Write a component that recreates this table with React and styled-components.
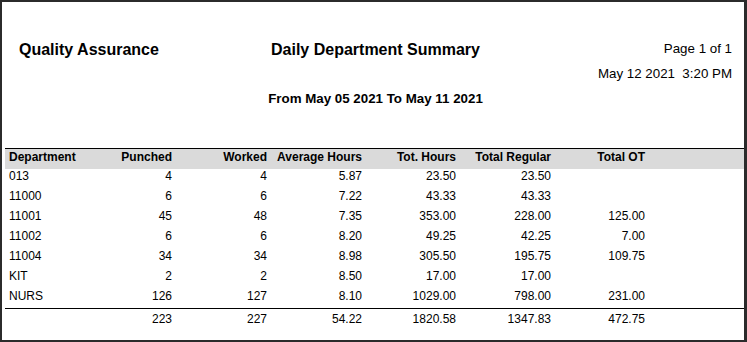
import React from "react";
import styled, { createGlobalStyle } from "styled-components";

const rows = [
  { dept: "013", punched: "4", worked: "4", avg: "5.87", tot: "23.50", reg: "23.50", ot: "" },
  { dept: "11000", punched: "6", worked: "6", avg: "7.22", tot: "43.33", reg: "43.33", ot: "" },
  { dept: "11001", punched: "45", worked: "48", avg: "7.35", tot: "353.00", reg: "228.00", ot: "125.00" },
  { dept: "11002", punched: "6", worked: "6", avg: "8.20", tot: "49.25", reg: "42.25", ot: "7.00" },
  { dept: "11004", punched: "34", worked: "34", avg: "8.98", tot: "305.50", reg: "195.75", ot: "109.75" },
  { dept: "KIT", punched: "2", worked: "2", avg: "8.50", tot: "17.00", reg: "17.00", ot: "" },
  { dept: "NURS", punched: "126", worked: "127", avg: "8.10", tot: "1029.00", reg: "798.00", ot: "231.00" },
];

const totals = { dept: "", punched: "223", worked: "227", avg: "54.22", tot: "1820.58", reg: "1347.83", ot: "472.75" };

const columns = [
  { key: "dept", label: "Department", align: "left" },
  { key: "punched", label: "Punched" },
  { key: "worked", label: "Worked" },
  { key: "avg", label: "Average Hours" },
  { key: "tot", label: "Tot. Hours" },
  { key: "reg", label: "Total Regular" },
  { key: "ot", label: "Total OT" },
];

export default function App() {
  return (
    <>
      <GlobalStyle />
      <Frame>
        <TitleRow>
          <Title>Quality Assurance</Title>
          <Title>Daily Department Summary</Title>
          <Meta>
            <MetaLine>Page 1 of 1</MetaLine>
            <MetaLine $gap>May 12 2021  3:20 PM</MetaLine>
          </Meta>
        </TitleRow>
        <Range>From May 05 2021 To May 11 2021</Range>
        <Table>
          <HeadRow>
            {columns.map((c) => (
              <Cell key={c.key} $align={c.align}>
                {c.label}
              </Cell>
            ))}
          </HeadRow>
          {rows.map((r) => (
            <DataRow key={r.dept}>
              {columns.map((c) => (
                <Cell key={c.key} $align={c.align}>
                  {r[c.key]}
                </Cell>
              ))}
            </DataRow>
          ))}
          <TotalRow>
            {columns.map((c) => (
              <Cell key={c.key} $align={c.align}>
                {totals[c.key]}
              </Cell>
            ))}
          </TotalRow>
        </Table>
      </Frame>
    </>
  );
}

const GlobalStyle = createGlobalStyle`
  html, body {
    margin: 0;
    padding: 0;
    background: #2b2b2b;
  }
  body {
    font-family: "Liberation Sans", Arial, sans-serif;
    color: #000;
  }
`;

const Frame = styled.div`
  box-sizing: border-box;
  width: 747px;
  height: 342px;
  background: #fff;
  border: 2px solid #2b2b2b;
  border-right-width: 3px;
  padding-top: 39px;
  overflow: hidden;
`;

const TitleRow = styled.div`
  display: grid;
  grid-template-columns: 1fr auto 1fr;
  align-items: start;
  padding: 0 12px 0 17px;
`;

const Title = styled.div`
  font-size: 16px;
  font-weight: bold;
  line-height: 18px;
  white-space: nowrap;
`;

const Meta = styled.div`
  display: flex;
  flex-direction: column;
  align-items: flex-end;
`;

const MetaLine = styled.div`
  font-size: 13.33px;
  line-height: 15px;
  white-space: pre;
  margin-top: ${(p) => (p.$gap ? "10px" : "0")};
`;

const Range = styled.div`
  margin-top: 10px;
  padding: 0 12px 0 17px;
  text-align: center;
  font-size: 13.33px;
  font-weight: bold;
  line-height: 15px;
`;

const Table = styled.div`
  margin: 42px 0 0 3px;
  font-size: 12px;
`;

const Row = styled.div`
  display: grid;
  grid-template-columns: 68px 95px 95px 95px 94px 95px 94px 1fr;
  padding: 0 4px;
  line-height: 14px;
`;

const HeadRow = styled(Row)`
  border-top: 1px solid #000;
  background: #dadada;
  font-weight: bold;
  padding-top: 1px;
  padding-bottom: 5px;
`;

const DataRow = styled(Row)`
  padding-bottom: 6px;
`;

const TotalRow = styled(Row)`
  border-top: 1px solid #000;
  margin-top: -1px;
  padding-top: 3px;
`;

const Cell = styled.div`
  text-align: ${(p) => p.$align || "right"};
  white-space: nowrap;
`;
